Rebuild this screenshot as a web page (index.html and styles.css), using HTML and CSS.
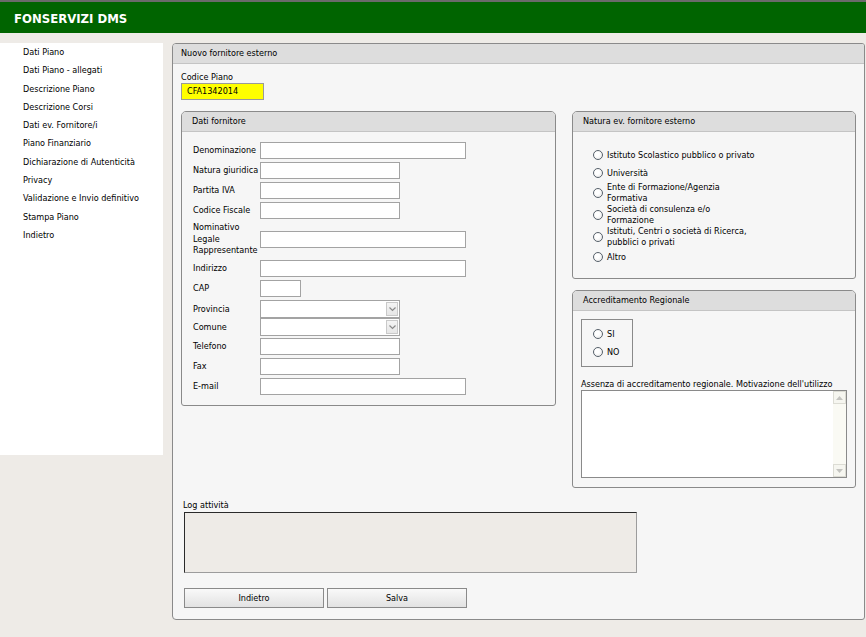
FILE: index.html
```html
<!DOCTYPE html>
<html lang="it">
<head>
<meta charset="utf-8">
<title>FONSERVIZI DMS</title>
<link rel="stylesheet" href="styles.css">
</head>
<body>
<header class="topbar"><span class="brand">FONSERVIZI DMS</span></header>
<div class="layout">
  <nav class="sidebar">
    <ul>
      <li>Dati Piano</li>
      <li>Dati Piano - allegati</li>
      <li>Descrizione Piano</li>
      <li>Descrizione Corsi</li>
      <li>Dati ev. Fornitore/i</li>
      <li>Piano Finanziario</li>
      <li>Dichiarazione di Autenticità</li>
      <li>Privacy</li>
      <li>Validazione e Invio definitivo</li>
      <li>Stampa Piano</li>
      <li>Indietro</li>
    </ul>
  </nav>
  <main class="panel">
    <div class="panel-head">Nuovo fornitore esterno</div>
    <div class="panel-body">
      <div class="lbl-top">Codice Piano</div>
      <div class="codice">CFA1342014</div>
      <div class="cols">
        <section class="box box-left">
          <div class="box-head">Dati fornitore</div>
          <div class="box-body fields">
            <div class="frow"><span class="lbl">Denominazione</span><input class="inp w-wide" type="text"></div>
            <div class="frow"><span class="lbl">Natura giuridica</span><input class="inp w-mid" type="text"></div>
            <div class="frow"><span class="lbl">Partita IVA</span><input class="inp w-mid" type="text"></div>
            <div class="frow"><span class="lbl">Codice Fiscale</span><input class="inp w-mid" type="text"></div>
            <div class="frow frow-multi"><span class="lbl lbl-multi">Nominativo<br>Legale<br>Rappresentante</span><input class="inp w-wide" type="text"></div>
            <div class="frow"><span class="lbl">Indirizzo</span><input class="inp w-wide" type="text"></div>
            <div class="frow"><span class="lbl">CAP</span><input class="inp w-cap" type="text"></div>
            <div class="frow frow-sel"><span class="lbl">Provincia</span><div class="sel"><span class="sel-box"></span><span class="sel-btn"><svg width="7" height="5" viewBox="0 0 7 5"><path d="M0.5 0.5 L3.5 3.5 L6.5 0.5" fill="none" stroke="#8a8a8a" stroke-width="1.2"/></svg></span></div></div>
            <div class="frow frow-sel frow-tight"><span class="lbl">Comune</span><div class="sel"><span class="sel-box"></span><span class="sel-btn"><svg width="7" height="5" viewBox="0 0 7 5"><path d="M0.5 0.5 L3.5 3.5 L6.5 0.5" fill="none" stroke="#8a8a8a" stroke-width="1.2"/></svg></span></div></div>
            <div class="frow frow-after"><span class="lbl">Telefono</span><input class="inp w-mid" type="text"></div>
            <div class="frow"><span class="lbl">Fax</span><input class="inp w-mid" type="text"></div>
            <div class="frow"><span class="lbl">E-mail</span><input class="inp w-wide" type="text"></div>
          </div>
        </section>
        <div class="col-right">
          <section class="box box-natura">
            <div class="box-head">Natura ev. fornitore esterno</div>
            <div class="box-body radios">
              <label class="rrow"><input type="radio" name="natura"><span>Istituto Scolastico pubblico o privato</span></label>
              <label class="rrow"><input type="radio" name="natura"><span>Università</span></label>
              <label class="rrow rrow-2"><input type="radio" name="natura"><span>Ente di Formazione/Agenzia<br>Formativa</span></label>
              <label class="rrow rrow-2"><input type="radio" name="natura"><span>Società di consulenza e/o<br>Formazione</span></label>
              <label class="rrow rrow-2"><input type="radio" name="natura"><span>Istituti, Centri o società di Ricerca,<br>pubblici o privati</span></label>
              <label class="rrow"><input type="radio" name="natura"><span>Altro</span></label>
            </div>
          </section>
          <section class="box box-acc">
            <div class="box-head">Accreditamento Regionale</div>
            <div class="box-body acc-body">
              <div class="acc-radios">
                <label class="rrow"><input type="radio" name="acc"><span>SI</span></label>
                <label class="rrow"><input type="radio" name="acc"><span>NO</span></label>
              </div>
              <div class="acc-lbl">Assenza di accreditamento regionale. Motivazione dell'utilizzo</div>
              <div class="ta">
                <textarea class="ta-input"></textarea>
                <div class="sb">
                  <span class="sbb"><svg width="7" height="4" viewBox="0 0 7 4"><path d="M0 4 L3.5 0 L7 4 Z" fill="#c4c4c0"/></svg></span>
                  <span class="sbb"><svg width="7" height="4" viewBox="0 0 7 4"><path d="M0 0 L3.5 4 L7 0 Z" fill="#c4c4c0"/></svg></span>
                </div>
              </div>
            </div>
          </section>
        </div>
      </div>
      <div class="log">
        <div class="log-lbl">Log attività</div>
        <div class="log-box"></div>
      </div>
      <div class="buttons">
        <button class="btn" type="button">Indietro</button>
        <button class="btn" type="button">Salva</button>
      </div>
    </div>
  </main>
</div>
</body>
</html>
```
FILE: styles.css
```css
* { box-sizing: border-box; }

body {
  margin: 0;
  background: #eeebe7;
  font-family: "DejaVu Sans Condensed", "DejaVu Sans", sans-serif;
  font-stretch: condensed;
  font-size: 9px;
  color: #000;
}

.topbar {
  height: 33px;
  border-top: 2px solid #6a6a6a;
  background: #006400;
  display: flex;
  align-items: center;
  padding: 2px 0 0 14px;
}

.brand {
  color: #fff;
  font-weight: bold;
  font-size: 13px;
}

.layout {
  display: flex;
  align-items: flex-start;
  padding-top: 10px;
}

.sidebar {
  width: 163px;
  height: 412px;
  background: #fff;
}

.sidebar ul {
  list-style: none;
  margin: 0;
  padding: 0 0 0 23px;
}

.sidebar li {
  height: 18.3px;
  line-height: 18.3px;
  white-space: nowrap;
}

.panel {
  margin-left: 9px;
  width: 693px;
  height: 577px;
  border: 1px solid #8a8a8a;
  border-radius: 4px 3px 3px 4px;
  background: #f6f6f6;
  overflow: hidden;
}

.panel-head {
  height: 20px;
  line-height: 19px;
  background: #dddddd;
  border-bottom: 1px solid #c4c4c4;
  padding-left: 8px;
}

.panel-body {
  padding: 8px 8px 0 8px;
}

.lbl-top {
  line-height: 11px;
}

.codice {
  width: 83px;
  height: 17px;
  line-height: 15px;
  background: #ffff00;
  border: 1px solid #9a9a9a;
  padding-left: 5px;
}

.cols {
  display: flex;
  align-items: flex-start;
  gap: 16px;
  margin-top: 11px;
}

.box {
  border: 1px solid #8a8a8a;
  border-radius: 5px 5px 3px 3px;
  background: #f6f6f6;
  overflow: hidden;
}

.box-head {
  height: 20px;
  line-height: 19px;
  background: #dddddd;
  border-bottom: 1px solid #c4c4c4;
  padding-left: 10px;
}

.box-left {
  width: 375px;
}

.fields {
  padding: 10px 0 10px 11px;
}

.frow {
  display: flex;
  align-items: center;
  min-height: 17px;
  margin-top: 3px;
}

.frow:first-child { margin-top: 0; }
.frow-multi { min-height: 35px; }
.frow-sel { min-height: 18px; }
.frow-tight { margin-top: 0; }
.frow-after { margin-top: 2px; }

.lbl {
  width: 67px;
  flex: none;
  line-height: 11px;
  white-space: nowrap;
}

.lbl-multi { line-height: 11.5px; }

.inp {
  height: 17px;
  border: 1px solid #a3a3a3;
  background: #fff;
  margin: 0;
  padding: 0 3px;
  font: inherit;
  outline: none;
}

.w-wide { width: 206px; }
.w-mid { width: 140px; }
.w-cap { width: 41px; }

.sel {
  display: flex;
  width: 140px;
  height: 18px;
  border: 1px solid #a3a3a3;
  background: #fff;
}

.sel-box { flex: 1; }

.sel-btn {
  width: 12px;
  margin: 1px 1px 1px 0;
  border: 1px solid #c9c9c9;
  background: linear-gradient(#f4f4f4, #e6e6e6);
  display: flex;
  align-items: center;
  justify-content: center;
}

.col-right {
  width: 284px;
  display: flex;
  flex-direction: column;
  gap: 11px;
}

.radios {
  padding: 14px 0 12px 20px;
}

.rrow {
  display: flex;
  align-items: center;
  gap: 4px;
  min-height: 18px;
  line-height: 11px;
}

.rrow-2 { min-height: 22px; }

.rrow input {
  appearance: none;
  -webkit-appearance: none;
  width: 10px;
  height: 10px;
  margin: 0;
  flex: none;
  border: 1px solid #56606a;
  border-radius: 50%;
  background: radial-gradient(circle at 40% 40%, #ffffff 30%, #e4e4e4 100%);
}

.acc-body {
  padding: 8px 7px 9px 8px;
}

.acc-radios {
  width: 52px;
  height: 48px;
  border: 1px solid #8a8a8a;
  padding: 5px 0 5px 11px;
}

.acc-lbl {
  margin-top: 12px;
  line-height: 11px;
  white-space: nowrap;
}

.ta {
  display: flex;
  width: 266px;
  height: 88px;
  border: 1px solid #8a8a8a;
  background: #fff;
}

.ta-input {
  flex: 1;
  border: none;
  resize: none;
  outline: none;
  margin: 0;
  font: inherit;
}

.sb {
  width: 13px;
  background: #fafaf4;
  display: flex;
  flex-direction: column;
  justify-content: space-between;
}

.sbb {
  height: 13px;
  border: 1px solid #dcdcd4;
  background: #f6f6f0;
  display: flex;
  align-items: center;
  justify-content: center;
}

.log {
  margin-top: 12px;
  padding-left: 2px;
}

.log-lbl {
  line-height: 11px;
}

.log-box {
  width: 453px;
  height: 61px;
  margin: 1px 0 0 1px;
  background: #eeebe7;
  border-top: 1px solid #2a2a2a;
  border-left: 1px solid #2a2a2a;
  border-right: 1px solid #9c9c9c;
  border-bottom: 1px solid #9c9c9c;
}

.buttons {
  display: flex;
  gap: 3px;
  margin: 15px 0 0 3px;
}

.btn {
  width: 140px;
  height: 20px;
  margin: 0;
  border: 1px solid #8a8a8a;
  background: linear-gradient(#f9f9f9, #e2e2e2);
  font: inherit;
  color: #000;
  padding: 0;
}
```
